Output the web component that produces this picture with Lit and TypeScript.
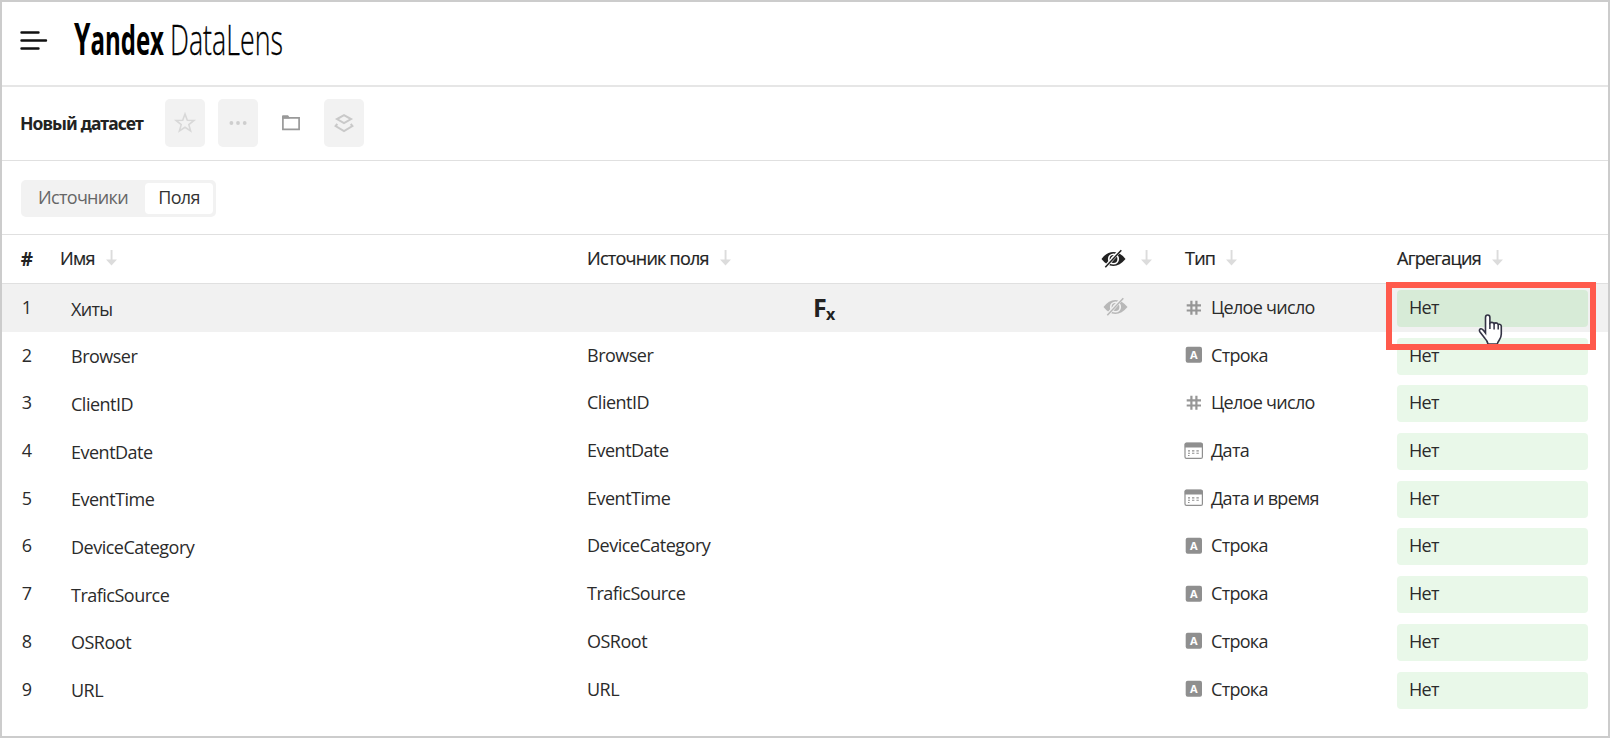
import { LitElement, html, css, nothing } from "lit";
import { customElement } from "lit/decorators.js";

type Kind = "int" | "str" | "date";
interface Field { name: string; source: string; kind: Kind; type: string; formula?: boolean; }

const FIELDS: Field[] = [
  { name: "Хиты", source: "", kind: "int", type: "Целое число", formula: true },
  { name: "Browser", source: "Browser", kind: "str", type: "Строка" },
  { name: "ClientID", source: "ClientID", kind: "int", type: "Целое число" },
  { name: "EventDate", source: "EventDate", kind: "date", type: "Дата" },
  { name: "EventTime", source: "EventTime", kind: "date", type: "Дата и время" },
  { name: "DeviceCategory", source: "DeviceCategory", kind: "str", type: "Строка" },
  { name: "TraficSource", source: "TraficSource", kind: "str", type: "Строка" },
  { name: "OSRoot", source: "OSRoot", kind: "str", type: "Строка" },
  { name: "URL", source: "URL", kind: "str", type: "Строка" },
];

const arrow = html`<svg class="arrow" width="11" height="16" viewBox="0 0 11 16"><path d="M4.6 0h1.9v9.5H11L5.5 15.5 0 9.5h4.6z" fill="#dcdcdc"/></svg>`;

const eye = (color: string, bg: string) => html`<svg width="25" height="20" viewBox="0 0 25 20">
  <path d="M.5 10C4 5.200 8 3 12.300 3s8.500 2.200 12.200 7c-3.700 4.800-7.900 7-12.200 7S4 14.800.5 10z" fill=${color}/>
  <circle cx="12.500" cy="10" r="5.600" fill=${bg}/>
  <circle cx="12.500" cy="10" r="3.900" fill=${color}/>
  <path d="M10.500 10.300c0-1.600.9-2.500 2.300-2.500" stroke=${bg} stroke-width="1.200" fill="none"/>
  <path d="M3.800 18.600L19.600.8" stroke=${bg} stroke-width="3.400"/>
  <path d="M4.300 18.300L20.300 1.200" stroke=${color} stroke-width="1.500"/>
</svg>`;

const kindIcon = {
  int: html`<svg width="19" height="17" viewBox="0 0 19 17"><path d="M7.400 1.800v14M12.400 1.800v14M2.700 6.300h14.300M2.700 11.500h14.300" stroke="#969696" stroke-width="2.200" fill="none"/></svg>`,
  str: html`<svg width="19" height="17" viewBox="0 0 19 17"><rect x="1.700" y=".7" width="16.300" height="16" rx="2" fill="#8f8f8f"/><text x="9.850" y="12.900" text-anchor="middle" class="glyph">A</text></svg>`,
  date: html`<svg width="19" height="17" viewBox="0 0 19 17"><rect x="1" y="1.200" width="17.400" height="15.200" rx="1.500" fill="#fff" stroke="#8f8f8f" stroke-width="1.200"/><path d="M.8 5.500V2.300Q.8.800 2.300.8h14.800q1.500 0 1.500 1.500v3.200z" fill="#8f8f8f"/><path d="M4 8.900h2M8 8.900h2.400M12.400 8.900h2.400M4 11.200h2M8 11.200h2.400M12.400 11.200h2.400M4 13.500h1.500" stroke="#8f8f8f" stroke-width="1.100"/></svg>`,
};

@customElement("app-root")
export class AppRoot extends LitElement {
  static styles = css`
    :host { display: block; position: relative; box-sizing: border-box; width: 1610px; height: 738px; border: 2px solid #ccc; background: #fff; color: #2b2b2b; font: 18px/24px "Open Sans", "Noto Sans", sans-serif; letter-spacing: -0.7px; overflow: hidden; }
    * { box-sizing: border-box; }
    svg { display: block; flex: none; overflow: visible; letter-spacing: 0; }
    .top { height: 85px; border-bottom: 2px solid #e6e6e6; display: flex; padding: 18px 0 0 18px; }
    .burger { margin-top: 10px; }
    .logo { margin-left: 26px; }
    .brand { font: 700 41px "Open Sans", sans-serif; fill: #000; }
    .cap { font-size: 45px; }
    .product { font: 300 42px "Open Sans", sans-serif; fill: #000; stroke: #000; stroke-width: 0.3px; }
    .bar { height: 74px; border-bottom: 1px solid #e0e0e0; display: flex; align-items: center; padding: 0 0 1px 18px; }
    .title { font: 700 17.5px/24px "Noto Sans", sans-serif; letter-spacing: -0.9px; width: 145px; color: #222; white-space: nowrap; padding-bottom: 1px; }
    .btn { width: 40px; height: 48px; border-radius: 5px; background: #f2f2f2; margin-right: 13px; display: flex; align-items: center; justify-content: center; }
    .plain { background: none; }
    .tabs { height: 74px; border-bottom: 1px solid #e0e0e0; display: flex; align-items: center; padding: 2px 0 0 19px; }
    .group { display: flex; width: 195px; height: 37px; background: #f2f2f2; border-radius: 5px; padding: 3px; }
    .tab { flex: none; width: 121px; height: 31px; padding-right: 3px; text-align: center; color: #666; line-height: 28px; }
    .on { width: 68px; padding: 0; background: #fff; border-radius: 4px; color: #333; }
    .row { display: grid; grid-template-columns: 58px 527px 515px 40px 43px 212px 191px; height: 47.7px; align-items: center; }
    .head { height: 49.200px; border-bottom: 1px solid #e0e0e0; color: #222; }
    .head .cell { padding-bottom: 2px; }
    .head .gap { letter-spacing: -0.75px; -webkit-text-stroke: 0.2px #222; }
    .hover { background: #f1f1f1; }
    .cell { display: flex; align-items: center; white-space: nowrap; padding-bottom: 2px; }
    .gap { gap: 11px; }
    .num { justify-content: center; padding-right: 9px; }
    .head .hash { font-weight: 700; padding-bottom: 0; font-size: 19px; }
    .name { padding: 1px 0 0 11px; }
    .latin { letter-spacing: -0.5px; }
    .type { gap: 8px; margin-left: -1px; }
    .eyecell { margin-left: 1px; }
    .head .eyehead { margin-left: -1px; padding-bottom: 0; }
    .arrowcell { margin-left: -1px; }
    .fx { margin: 3px 0 0 226px; }
    .fbig { font: 700 25px "Noto Sans", sans-serif; fill: #222; }
    .fsmall { font: 700 16px "Noto Sans", sans-serif; fill: #222; }
    .glyph { font: 700 11px "Noto Sans", sans-serif; fill: #fff; }
    .pill { height: 37px; border-radius: 4px; background: #e9f8e9; padding: 0 0 3px 12px; margin-top: 1px; display: flex; align-items: center; }
    .pressed { background: #d7ebd7; }
    .mark { position: absolute; left: 1384px; top: 280px; width: 210px; height: 68px; border: 6px solid #ff5a4c; }
    .hand { position: absolute; left: 1475px; top: 311px; }
  `;

  render() {
    return html`
      <div class="top">
        <svg class="burger" width="28" height="22" viewBox="0 0 28 22"><path d="M1.500 2.500h17M1.500 10.500h24.500M1.500 18.500h17" stroke="#111" stroke-width="2.400" stroke-linecap="round"/></svg>
        <svg class="logo" width="212" height="42" viewBox="0 0 212 42">
          <text class="brand" x="0" y="34.500" textLength="90" lengthAdjust="spacingAndGlyphs"><tspan class="cap">Y</tspan>andex</text>
          <text class="product" x="96" y="34.500" textLength="113" lengthAdjust="spacingAndGlyphs">DataLens</text>
        </svg>
      </div>
      <div class="bar">
        <div class="title">Новый датасет</div>
        <div class="btn"><svg width="22" height="22" viewBox="0 0 22 22"><path d="M11 2l2.300 6.200 6.700.3-5.200 4.100 1.800 6.400L11 15.300 5.400 19l1.800-6.400L2 8.500l6.700-.3z" fill="none" stroke="#d8d8d8" stroke-width="1.600"/></svg></div>
        <div class="btn"><svg width="20" height="6" viewBox="0 0 20 6" fill="#cecece"><circle cx="3.400" cy="3" r="1.900"/><circle cx="10" cy="3" r="1.900"/><circle cx="16.700" cy="3" r="1.900"/></svg></div>
        <div class="btn plain"><svg width="20" height="18" viewBox="0 0 20 18"><path d="M1.900 3.800h16.200v11.500H1.900z" fill="none" stroke="#999" stroke-width="1.700"/><path d="M1 4.500V2.200q0-1 1-1h5l1.500 2v1.300z" fill="#999"/></svg></div>
        <div class="btn"><svg width="22" height="22" viewBox="0 0 22 22" fill="none" stroke="#c9c9c9" stroke-width="2"><path d="M11 3.200l7 3.900-7 3.900-7-3.900z"/><path d="M4.300 12L2.600 14 11 19l8.400-5-1.700-2"/></svg></div>
      </div>
      <div class="tabs"><div class="group"><div class="tab">Источники</div><div class="tab on">Поля</div></div></div>
      <div class="row head">
        <div class="cell num hash">#</div>
        <div class="cell gap">Имя ${arrow}</div>
        <div class="cell gap">Источник поля ${arrow}</div>
        <div class="cell eyehead">${eye("#222", "#fff")}</div>
        <div class="cell arrowcell">${arrow}</div>
        <div class="cell gap">Тип ${arrow}</div>
        <div class="cell gap">Агрегация ${arrow}</div>
      </div>
      ${FIELDS.map((f, i) => html`<div class="row ${i === 0 ? "hover" : ""}">
        <div class="cell num">${i + 1}</div>
        <div class="cell name ${f.formula ? "" : "latin"}">${f.name}</div>
        <div class="cell latin">${f.formula ? html`<svg class="fx" width="26" height="28" viewBox="0 0 26 28"><text class="fbig" x="0" y="22">F</text><text class="fsmall" x="13" y="25">x</text></svg>` : f.source}</div>
        <div class="cell eyecell">${f.formula ? eye("#b8b8b8", "#f1f1f1") : nothing}</div>
        <div></div>
        <div class="cell type">${kindIcon[f.kind]}<span>${f.type}</span></div>
        <div class="pill ${i === 0 ? "pressed" : ""}">Нет</div>
      </div>`)}
      <svg class="hand" width="27" height="34" viewBox="0 0 27 34"><path d="M8.500 20V4.500Q8.500 2 10.700 2t2.200 2.500V10q.6-.6 2-.6t2.200 1.300q.6-.8 1.900-.8t2.200 1.500q3-.7 3.100 2v7.600q0 3-2 6t-2 4H11q-.5-3-3-5.500l-5-6.500q-1.300-2 .3-3t5.200 4z" fill="#fff" stroke="#334" stroke-width="1.600"/><path d="M12.900 10v6M17.100 10.500v6M21.200 11.500v5" stroke="#334" stroke-width="1.500"/></svg>
      <div class="mark"></div>
    `;
  }
}
